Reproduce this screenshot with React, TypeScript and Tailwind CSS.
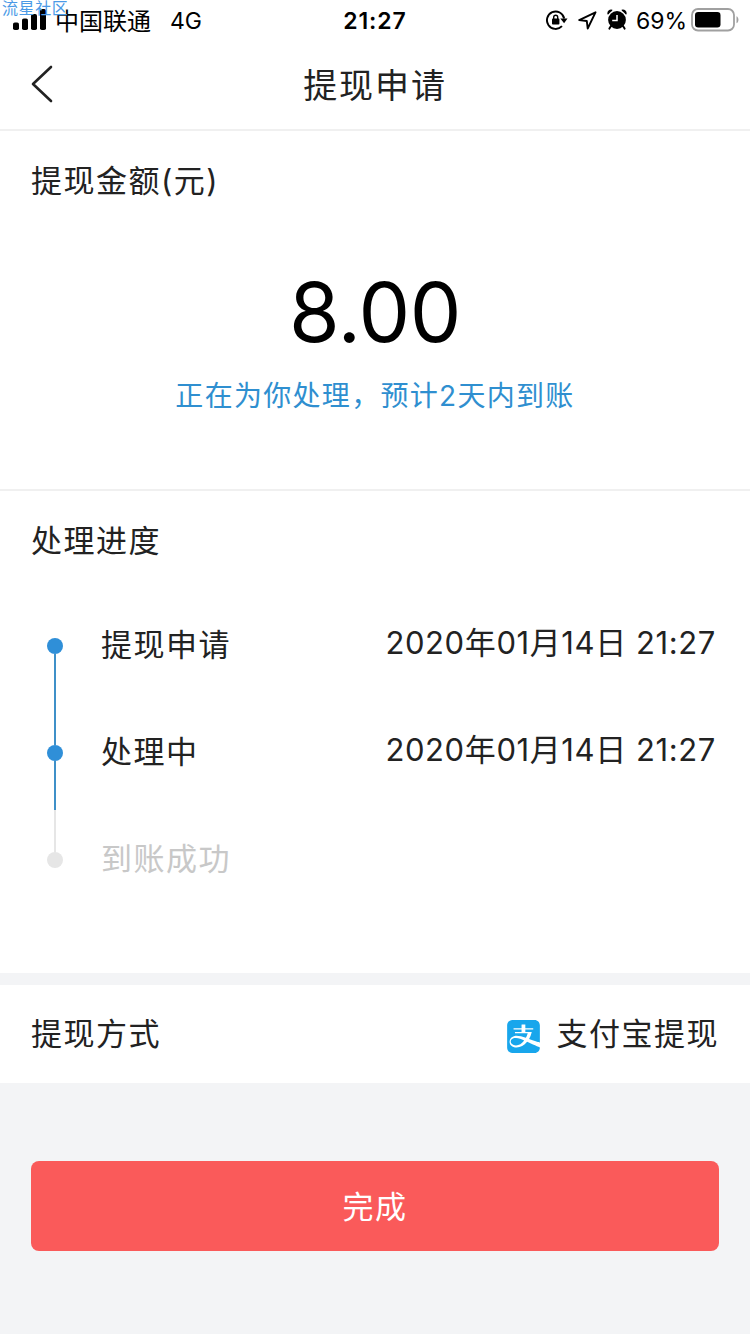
import React from 'react';
import { SiAlipay } from 'react-icons/si';

interface Step {
  label: string;
  time?: string;
}

const steps: Step[] = [
  { label: '提现申请', time: '2020年01月14日 21:27' },
  { label: '处理中', time: '2020年01月14日 21:27' },
  { label: '到账成功' },
];

const SignalIcon: React.FC = () => (
  <svg width="34" height="21" viewBox="0 0 34 21" fill="black">
    <rect x="0" y="13.5" width="6" height="7.5" rx="1.8" />
    <rect x="9" y="9.5" width="6" height="11.5" rx="1.8" />
    <rect x="18" y="5" width="6" height="16" rx="1.8" />
    <rect x="27" y="0" width="6" height="21" rx="1.8" />
  </svg>
);

const RotationLockIcon: React.FC = () => (
  <svg width="22" height="20" viewBox="0 0 22 20" fill="none" stroke="black">
    <path d="M16 16.2A8.7 8.7 0 1 1 18.2 8.5" strokeWidth="1.9" />
    <path d="M14.3 8.5h7.2l-3.4 4.8z" fill="black" stroke="none" />
    <rect x="6" y="8.6" width="7.4" height="6" rx="0.8" fill="black" stroke="none" />
    <path d="M7.7 9.5V7.2a2 2 0 0 1 4 0v2.3" strokeWidth="1.4" />
  </svg>
);

const LocationIcon: React.FC = () => (
  <svg width="19" height="19" viewBox="0 0 19 19" fill="none" stroke="black" strokeWidth="1.9" strokeLinejoin="round">
    <path d="M17.5 1.3L1.2 9.1l7.6.9.9 7.5z" />
  </svg>
);

const AlarmIcon: React.FC = () => (
  <svg width="20" height="21" viewBox="0 0 20 21">
    <circle cx="10" cy="11" r="8.9" fill="black" />
    <path d="M1.3 5.2A3 3 0 0 1 5.2 1.5M18.7 5.2A3 3 0 0 0 14.8 1.5" fill="black" stroke="black" strokeWidth="1.6" />
    <path d="M4 17l-1.6 2.6M16 17l1.6 2.6" stroke="black" strokeWidth="2" strokeLinecap="round" />
    <path d="M10 6V11.4H5.2" stroke="white" strokeWidth="1.5" fill="none" />
  </svg>
);

const BatteryIcon: React.FC = () => (
  <svg width="49" height="24" viewBox="0 0 49 24" fill="none">
    <rect x="1" y="1" width="42" height="21.5" rx="6" stroke="#a0a0a0" strokeWidth="1.8" />
    <rect x="4" y="4" width="25.5" height="15.5" rx="3.2" fill="black" />
    <path d="M45.5 8.2c2.6 1 2.6 6 0 7z" fill="#a0a0a0" />
  </svg>
);

const StatusBar: React.FC = () => (
  <div className="relative grid h-10 grid-cols-3 items-center text-[23px] font-normal text-black">
    <span className="absolute left-[2px] top-0 text-[16px] leading-[17px] tracking-[0.6px] text-[#4b9ae6]">流星社区</span>
    <div className="flex items-center pl-[13px]">
      <div className="-mt-[2px]"><SignalIcon /></div>
      <span className="ml-[8px] mt-[4px] whitespace-nowrap text-[24px] leading-9">中国联通</span>
      <span className="ml-[19px] mt-[2px] leading-[38px]">4G</span>
    </div>
    <div className="mt-[2px] text-center font-semibold leading-[38px] tracking-[0.9px]">21:27</div>
    <div className="flex items-center justify-end pr-[10px]">
      <RotationLockIcon />
      <div className="ml-[10px]"><LocationIcon /></div>
      <div className="-mt-[2px] ml-[10px]"><AlarmIcon /></div>
      <span className="ml-[9px] mt-[2px] leading-[38px]">69%</span>
      <div className="ml-[4px]"><BatteryIcon /></div>
    </div>
  </div>
);

const Timeline: React.FC = () => (
  <div className="flex pl-[47px] pr-[34px] pt-[39px]">
    <div className="mt-[28px] flex w-4 flex-col items-center">
      <div className="size-4 rounded-full bg-[#2f8fd8]" />
      <div className="h-[91px] w-[2px] bg-[#3f90c8]" />
      <div className="size-4 rounded-full bg-[#2f8fd8]" />
      <div className="h-[49px] w-[2px] bg-[#3f90c8]" />
      <div className="h-[42px] w-[2px] bg-[#e6e6e6]" />
      <div className="size-4 rounded-full bg-[#e6e6e6]" />
    </div>
    <div className="ml-[38px] flex-1 pt-px">
      {steps.map((step) => (
        <div
          key={step.label}
          className={`flex h-[107px] items-start justify-between leading-[68px] ${step.time ? 'text-[#222]' : 'text-[#c8c8c8]'}`}
        >
          <span>{step.label}</span>
          {step.time && <span className="-mt-[2px] tracking-[0.6px]">{step.time}</span>}
        </div>
      ))}
    </div>
  </div>
);

const App: React.FC = () => {
  return (
    <div
      lang="zh-CN"
      className="flex h-[1334px] w-[750px] flex-col overflow-hidden bg-[#f3f4f6] font-['Inter','Noto_Sans_CJK_SC',sans-serif] text-[31px] font-[390] text-[#222]"
    >
      <div className="bg-white">
        <StatusBar />

        <header className="grid h-[91px] grid-cols-[1fr_auto_1fr] items-center border-b-2 border-[#f0f0f0]">
          <svg className="-mt-[2px] ml-[31px]" width="22" height="38" viewBox="0 0 22 38" fill="none" stroke="#222" strokeWidth="2.6">
            <path d="M20 2L2 19l18 17" strokeLinecap="round" strokeLinejoin="round" />
          </svg>
          <h1 className="pt-[2px] text-[34px] leading-[87px] tracking-[1.9px]">提现申请</h1>
        </header>

        <section className="h-[360px] border-b-2 border-[#f0f0f0]">
          <h2 className="px-[31px] pt-[20px] leading-[60px] tracking-[1.5px]">提现金额(元)</h2>
          <div className="mt-[53px] text-center text-[82px] font-normal leading-[98px] tracking-[-0.5px] text-black">8.00</div>
          <p className="mt-[9px] text-center text-[28px] leading-[50px] tracking-[1.3px] text-[#2f8fd0]">
            正在为你处理，预计2天内到账
          </p>
        </section>

        <section className="h-[482px]">
          <h2 className="px-[31px] pt-[20px] leading-[60px] tracking-[1.5px]">处理进度</h2>
          <div className="tracking-[1.5px]">
            <Timeline />
          </div>
        </section>
      </div>

      <div className="mt-[12px] flex h-[98px] items-center justify-between bg-white pl-[31px] pr-[31px] tracking-[1.5px]">
        <span>提现方式</span>
        <div className="flex items-center">
          <SiAlipay className="mt-1 size-[33px] text-[#18a6ec]" />
          <span className="ml-[17px]">支付宝提现</span>
        </div>
      </div>

      <div className="px-[31px] pt-[78px]">
        <button className="h-[90px] w-full rounded-lg bg-[#fa5a5a] pt-[2px] tracking-[1.5px] text-white">完成</button>
      </div>
    </div>
  );
};

export default App;
